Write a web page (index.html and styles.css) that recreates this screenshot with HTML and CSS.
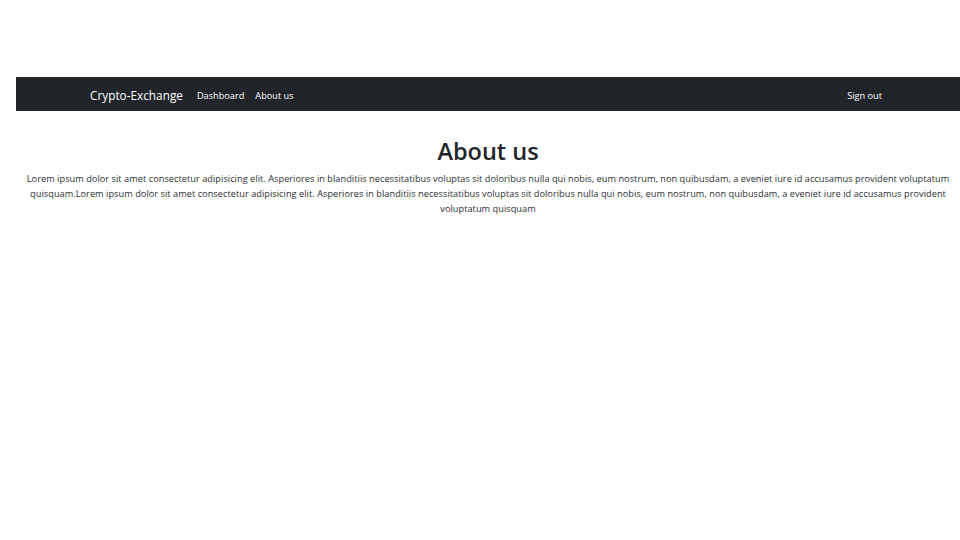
FILE: index.html
```html
<!DOCTYPE html>
<html lang="en">
<head>
<meta charset="utf-8">
<title>About us</title>
<link rel="stylesheet" href="styles.css">
</head>
<body>
<div class="page">
  <nav class="navbar">
    <div class="nav-inner">
      <div class="nav-left">
        <a class="brand" href="#">Crypto-Exchange</a>
        <a class="nav-link" href="#">Dashboard</a>
        <a class="nav-link" href="#">About us</a>
      </div>
      <a class="nav-link" href="#">Sign out</a>
    </div>
  </nav>
  <main class="content">
    <h1 class="title">About us</h1>
    <p class="text">Lorem ipsum dolor sit amet consectetur adipisicing elit. Asperiores in blanditiis necessitatibus voluptas sit doloribus nulla qui nobis, eum nostrum, non quibusdam, a eveniet iure id accusamus provident voluptatum quisquam.Lorem ipsum dolor sit amet consectetur adipisicing elit. Asperiores in blanditiis necessitatibus voluptas sit doloribus nulla qui nobis, eum nostrum, non quibusdam, a eveniet iure id accusamus provident voluptatum quisquam</p>
  </main>
</div>
</body>
</html>
```
FILE: styles.css
```css
html, body {
  margin: 0;
  padding: 0;
  background: #ffffff;
}
body {
  font-family: "Open Sans", "Noto Sans", sans-serif;
  color: #212529;
}
.page {
  padding: 77px 0 0 16px;
}
.navbar {
  background: #212529;
  height: 34px;
  display: flex;
  align-items: center;
}
.nav-inner {
  flex: 1;
  display: flex;
  align-items: center;
  justify-content: space-between;
  padding: 2px 78px 0 74px;
}
.nav-left {
  display: flex;
  align-items: center;
  gap: 11px;
}
.brand {
  color: #ffffff;
  font-size: 11.8px;
  text-decoration: none;
  margin-right: 3px;
}
.nav-link {
  color: #ffffff;
  font-size: 9.2px;
  text-decoration: none;
}
.content {
  text-align: center;
  padding: 0 10px;
}
.title {
  font-size: 23.5px;
  font-weight: 600;
  margin: 26px 0 6px;
  line-height: 1.2;
  color: #212529;
}
.text {
  font-size: 9.2px;
  letter-spacing: 0.04px;
  line-height: 15px;
  margin: 0;
  color: #2b2f33;
}
```
